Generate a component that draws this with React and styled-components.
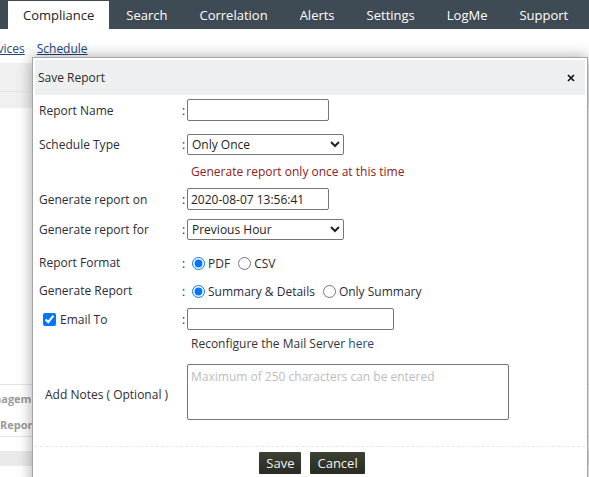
import React from 'react';
import styled, { createGlobalStyle } from 'styled-components';

const GlobalStyle = createGlobalStyle`
  html, body {
    margin: 0;
    padding: 0;
    background: #fff;
    font-family: 'Open Sans', 'Liberation Sans', sans-serif;
    overflow: hidden;
  }
  * { box-sizing: border-box; }
`;

const Page = styled.div`
  position: relative;
  width: 589px;
  height: 477px;
  overflow: hidden;
`;

const Nav = styled.div`
  display: flex;
  gap: 2px;
  height: 29px;
  padding: 1px 0 0 8px;
  background: #3f4b54;
`;

const Tab = styled.div`
  display: flex;
  align-items: center;
  padding: 0 15px 1px;
  font-size: 13px;
  color: ${p => (p.$active ? '#222' : '#fff')};
  background: ${p => (p.$active ? '#fff' : 'transparent')};
  white-space: nowrap;
`;

const SubNav = styled.div`
  display: flex;
  gap: 12px;
  height: 34px;
  align-items: center;
  padding-top: 5px;
  margin-left: -18px;
`;

const SubLink = styled.a`
  font-size: 12px;
  color: #22467a;
  text-decoration: underline;
`;

const Band = styled.div`
  height: ${p => p.$h}px;
  background: ${p => p.$bg || '#fff'};
  border-bottom: ${p => (p.$line ? '1px solid #e6e6e6' : 'none')};
  display: flex;
  align-items: center;
  font-size: 11px;
  font-weight: 700;
  color: #9a9a9a;
  white-space: nowrap;
  margin-left: ${p => p.$shift || 0}px;
`;

const Modal = styled.div`
  position: absolute;
  left: 32px;
  top: 57px;
  width: 556px;
  height: 440px;
  padding: 2px;
  background: #fff;
  border: 1px solid #a5a5a5;
  box-shadow: 0 0 14px rgba(0, 0, 0, 0.35);
`;

const Header = styled.div`
  display: flex;
  align-items: center;
  justify-content: space-between;
  height: 35px;
  padding: 0 10px 0 3px;
  background: #eeeff1;
  font-size: 12px;
  color: #2b2b2b;
`;

const Close = styled.svg`
  width: 8px;
  height: 8px;
`;

const Body = styled.div`
  padding: 0 0 0 4px;
`;

const Row = styled.div`
  display: flex;
  align-items: center;
  height: ${p => p.$h}px;
  margin-top: ${p => p.$mt}px;
  font-size: 12px;
  color: #2e2b36;
`;

const Label = styled.div`
  width: 143px;
  display: flex;
  align-items: center;
  padding-left: ${p => p.$indent || 0}px;
  margin-top: ${p => p.$dy || 0}px;
`;

const Colon = styled.div`
  width: 5px;
`;

const TextInput = styled.input`
  width: ${p => p.$w}px;
  height: 22px;
  margin: 0;
  padding: 0 3px;
  border: 1px solid #767676;
  border-radius: 2px;
  font-family: inherit;
  font-size: 12px;
  color: #222;
`;

const Select = styled.select`
  width: 157px;
  height: 21px;
  margin: 0;
  padding: 0;
  border: 1px solid #767676;
  border-radius: 2px;
  font-family: inherit;
  font-size: 12px;
  color: #222;
  background: #fff;
`;

const Hint = styled.div`
  padding-left: 152px;
  font-size: 12px;
  color: ${p => p.$color || '#333'};
`;

const Option = styled.label`
  display: inline-flex;
  align-items: center;
  margin-right: 3px;
  font-size: 12px;
  color: #2e2b36;
  input { margin: 0 3px 0 5px; }
`;

const Check = styled.input`
  margin: 0 4px;
`;

const NoteLink = styled.span`
  color: #22467a;
`;

const Notes = styled.textarea`
  width: 322px;
  height: 56px;
  margin: 0;
  padding: 3px 3px;
  border: 1px solid #767676;
  border-radius: 2px;
  resize: none;
  font-family: inherit;
  font-size: 12px;
  &::placeholder { color: #bcbcbc; }
`;

const Divider = styled.div`
  margin: 26px 0 0 -4px;
  border-top: 1px dashed #e8e8e8;
`;

const Footer = styled.div`
  display: flex;
  justify-content: center;
  gap: 9px;
  margin-top: 5px;
`;

const Button = styled.button`
  height: 22px;
  padding: 0 7px;
  border: none;
  border-radius: 1px;
  background: linear-gradient(#3d4234, #272b21);
  color: #f2f2f2;
  font-family: inherit;
  font-size: 13px;
`;

export default function App() {
  const tabs = ['Compliance', 'Search', 'Correlation', 'Alerts', 'Settings', 'LogMe', 'Support'];
  return (
    <Page>
      <GlobalStyle />
      <Nav>
        {tabs.map((t, i) => (
          <Tab key={t} $active={i === 0}>{t}</Tab>
        ))}
      </Nav>
      <SubNav>
        <SubLink>Devices</SubLink>
        <SubLink>Schedule</SubLink>
      </SubNav>
      <Band $h={29} $bg="#f0f0f0" $line />
      <Band $h={16} $bg="#f0f0f0" />
      <Band $h={277} $line />
      <Band $h={27} $shift={-23}>Management</Band>
      <Band $h={25} $line>Reports</Band>
      <Band $h={14} />
      <Band $h={15} $bg="#eaeaea" />

      <Modal>
        <Header>
          <span>Save Report</span>
          <Close viewBox="0 0 8 8">
            <path d="M1 1 L7 7 M7 1 L1 7" stroke="#111" strokeWidth="1.7" />
          </Close>
        </Header>
        <Body>
          <Row $h={22} $mt={4}>
            <Label>Report Name</Label>
            <Colon>:</Colon>
            <TextInput $w={142} />
          </Row>
          <Row $h={21} $mt={13}>
            <Label>Schedule Type</Label>
            <Colon>:</Colon>
            <Select defaultValue="once">
              <option value="once">Only Once</option>
            </Select>
          </Row>
          <Row $h={16} $mt={8}>
            <Hint $color="#8a2222">Generate report only once at this time</Hint>
          </Row>
          <Row $h={22} $mt={9}>
            <Label>Generate report on</Label>
            <Colon>:</Colon>
            <TextInput $w={142} defaultValue="2020-08-07 13:56:41" />
          </Row>
          <Row $h={21} $mt={9}>
            <Label>Generate report for</Label>
            <Colon>:</Colon>
            <Select defaultValue="hour">
              <option value="hour">Previous Hour</option>
            </Select>
          </Row>
          <Row $h={18} $mt={14}>
            <Label $dy={-2}>Report Format</Label>
            <Colon>:</Colon>
            <Option><input type="radio" name="fmt" defaultChecked />PDF</Option>
            <Option><input type="radio" name="fmt" />CSV</Option>
          </Row>
          <Row $h={18} $mt={10}>
            <Label $dy={-2}>Generate Report</Label>
            <Colon>:</Colon>
            <Option><input type="radio" name="kind" defaultChecked />Summary &amp; Details</Option>
            <Option><input type="radio" name="kind" />Only Summary</Option>
          </Row>
          <Row $h={22} $mt={8}>
            <Label>
              <Check type="checkbox" defaultChecked />
              Email To
            </Label>
            <Colon>:</Colon>
            <TextInput $w={207} />
          </Row>
          <Row $h={16} $mt={5}>
            <Hint>
              Reconfigure the Mail Server <NoteLink>here</NoteLink>
            </Hint>
          </Row>
          <Row $h={56} $mt={13}>
            <Label $indent={6} $dy={4}>Add Notes ( Optional )</Label>
            <Colon />
            <Notes placeholder="Maximum of 250 characters can be entered" />
          </Row>
          <Divider />
          <Footer>
            <Button>Save</Button>
            <Button>Cancel</Button>
          </Footer>
        </Body>
      </Modal>
    </Page>
  );
}
